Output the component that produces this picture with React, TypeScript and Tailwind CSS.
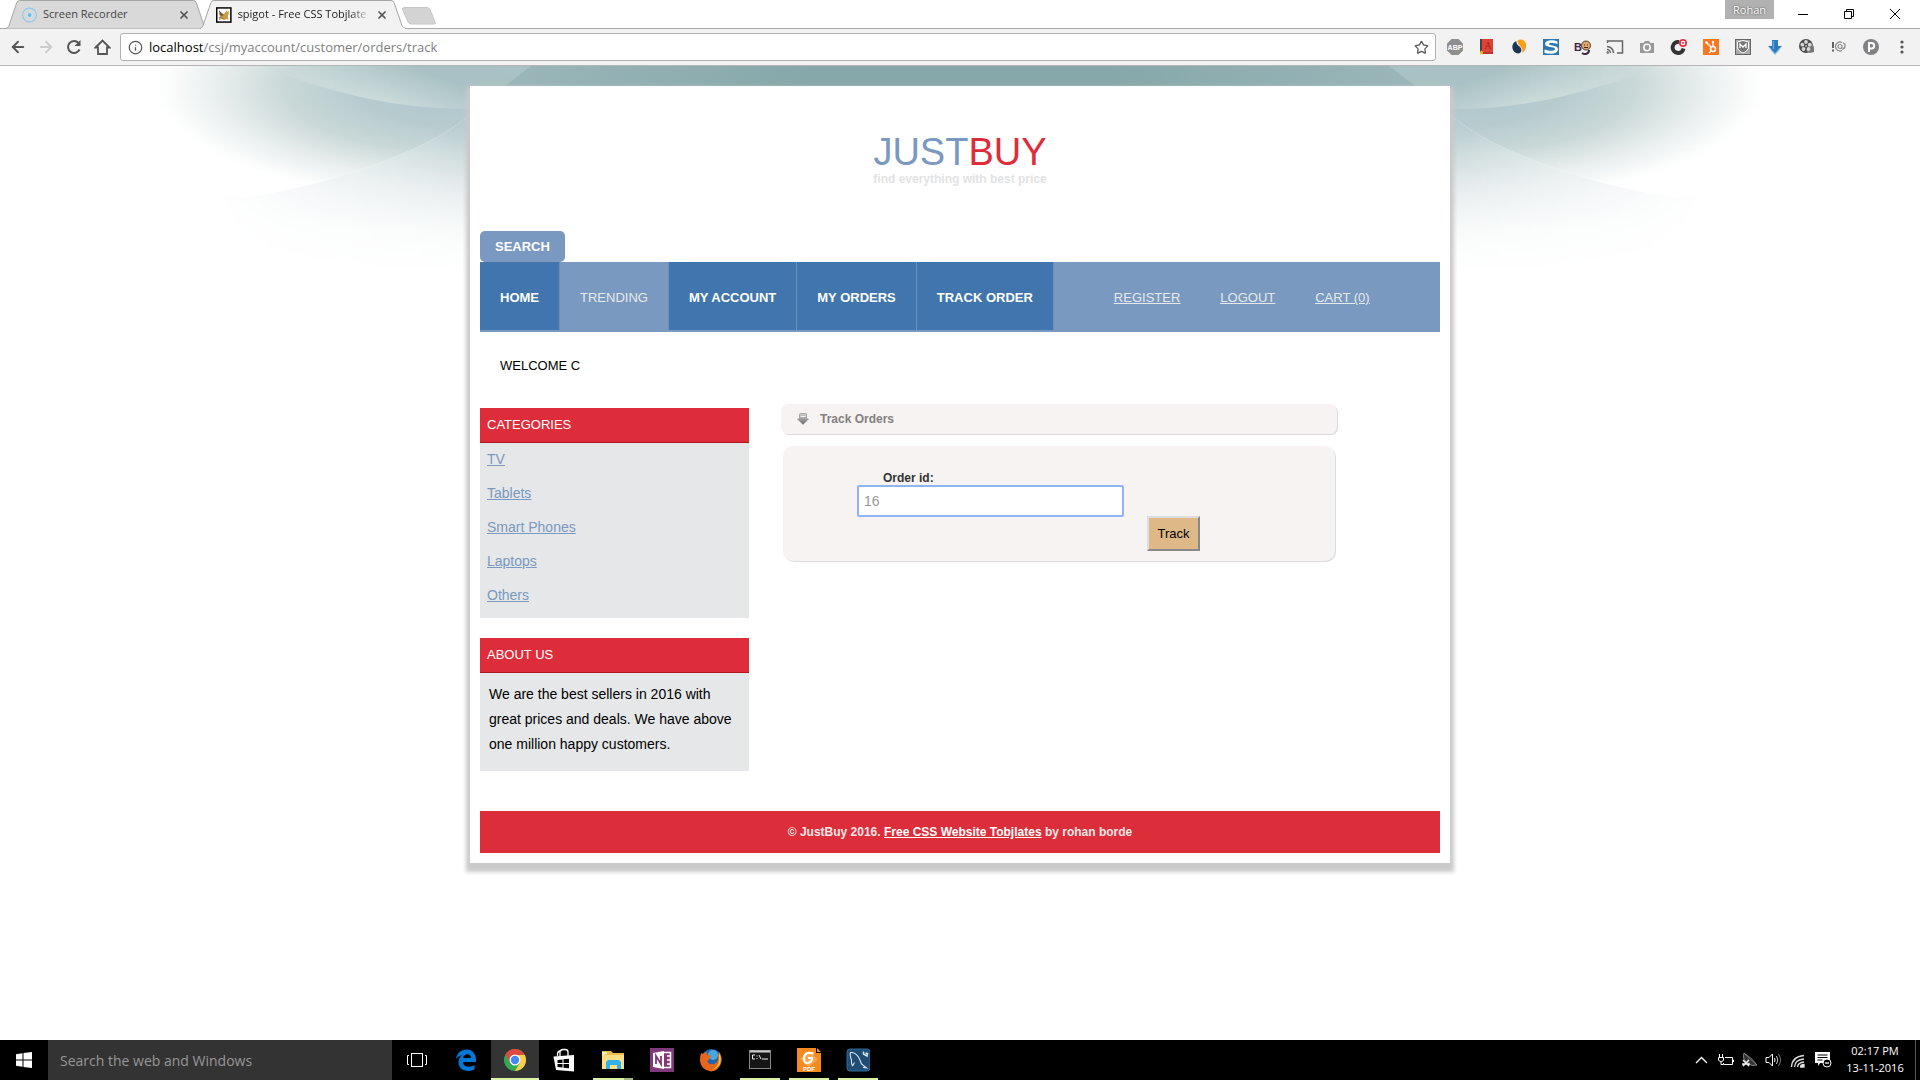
import React from "react";
import { ArrowLeft, ArrowRight, Info, Star, X } from "lucide-react";

const categories = ["TV", "Tablets", "Smart Phones", "Laptops", "Others"];

function Tab({ title, active, icon }: { title: string; active?: boolean; icon: React.ReactNode }) {
  return (
    <div className={active ? "relative z-10 -ml-2 h-[29px] w-[206px]" : "relative h-[29px] w-[202px]"}>
      <svg className="absolute inset-0 h-full w-full" viewBox="0 0 206 29" preserveAspectRatio="none" aria-hidden="true">
        <path
          d="M0 28.5C2 28 2.500 27 3 25.500L11 2.500Q12 .5 14 .5H191Q193 .5 194 2.500L202 25.500Q203 28 206 28.500"
          fill={active ? "#f2f2f2" : "#d9d9d9"}
          stroke="#a5a5a5"
        />
        {active && <path d="M1 29H205" stroke="#f2f2f2" strokeWidth="2" />}
      </svg>
      <div className="relative flex h-[29px] items-center pl-4 pr-4">
        {icon}
        <span
          className={
            active
              ? "ml-[6px] w-[136px] whitespace-nowrap text-[11px] text-[#222] [mask-image:linear-gradient(to_right,black_85%,transparent)]"
              : "ml-[6px] w-[138px] whitespace-nowrap text-[11px] text-[#444]"
          }
        >
          {title}
        </span>
        <button aria-label={"Close " + title} className="ml-1 flex h-4 w-4 items-center justify-center text-[#555]">
          <X size={12} strokeWidth={3.5} />
        </button>
      </div>
    </div>
  );
}

function RecorderIcon() {
  return (
    <svg width="16" height="16" viewBox="0 0 16 16" fill="none" aria-hidden="true">
      <circle cx="8" cy="8" r="7.300" stroke="#8ccbea" strokeWidth="1.200" />
      <circle cx="8" cy="8" r="3.500" fill="#c9e0ea" />
      <circle cx="8" cy="8" r="2" fill="#6abdeb" />
    </svg>
  );
}

function SpigotIcon() {
  return (
    <svg width="16" height="16" viewBox="0 0 16 16" aria-hidden="true">
      <rect x=".75" y=".75" width="14.500" height="14.500" fill="#fff" stroke="#000" strokeWidth="1.500" />
      <path d="M3 4l3 2 2 1 2-2 1-2 .5 2 1.500-1.500L13 7l-1 2 1 4-2-1-3 1-2-1-3 1 1-3z" fill="#cf9a45" />
      <path d="M3 3l3 3.500L8 8l-2 1-2-1zM10 10l1.500 2" fill="#6b5638" />
      <path d="M3 11l3-1 1.500 2" stroke="#777" fill="none" />
    </svg>
  );
}

const ext: { name: string; art: React.ReactNode }[] = [
  {
    name: "Adblock",
    art: (
      <>
        <path d="M5.500 1h7L17 5.500v7L12.500 17h-7L1 12.500v-7z" fill="#8e8e8e" />
        <text x="9" y="12" fontSize="7" fontWeight="700" fill="#fff" textAnchor="middle" fontFamily="Liberation Sans">ABP</text>
      </>
    ),
  },
  {
    name: "Dictionary",
    art: (
      <>
        <path d="M2 1h3v13H2z" fill="#444" />
        <path d="M4 1h11v13H4z" fill="#dd4437" />
        <text x="10" y="11" fontSize="10" fill="#a82019" textAnchor="middle" fontFamily="Liberation Serif">A</text>
        <path d="M3 14h12v2H4z" fill="#b5362c" />
        <path d="M2 14l1.500-1.500L5 14l-.5 2.500-1-.8-1.500.8z" fill="#f4bd12" />
      </>
    ),
  },
  {
    name: "SimilarWeb",
    art: (
      <>
        <path d="M6.500 3C1 5 1 12 6 15c5 2 7-3 4-6C8 7 6 6 6.500 3z" fill="#1d3553" />
        <path d="M8 2c5-2 9 2 8 7-.5 3-2 5-4 6 1-3 0-5-2-7C8 6 7 4 8 2z" fill="#f9a01b" />
      </>
    ),
  },
  {
    name: "Stylish",
    art: (
      <>
        <rect x="1" y="1" width="16" height="16" fill="#2f77b0" />
        <path d="M15.500 3.500C11 1.500 3 2 3 6c0 4 10 2 10 5 0 2.500-6 2-10.500.5V15c5 1.500 13.500 1.500 13.500-4 0-4-9-3-9-5 0-1.500 5-1 8.500 0z" fill="#fff" />
      </>
    ),
  },
  {
    name: "Bug",
    art: (
      <>
        <text x="0" y="13" fontSize="11" fontWeight="700" fill="#3d2445" fontFamily="Liberation Sans">B</text>
        <circle cx="12" cy="7.500" r="4.500" fill="#e0a66b" stroke="#583b30" />
        <path d="M10 7h1M13 7h1M10 9.500h4" stroke="#4a2b22" />
        <path d="M8 15c3 2 7 1 7-3" stroke="#3d2445" strokeWidth="2" fill="none" />
      </>
    ),
  },
  {
    name: "Cast",
    art: (
      <g fill="none" stroke="#666" strokeWidth="1.500">
        <path d="M1.500 5V3h15v12H11" />
        <path d="M1 8.500A6.500 6.500 0 0 1 7.500 15M1 11.500A3.500 3.500 0 0 1 4.500 15" />
        <circle cx="1.700" cy="14.500" r=".5" fill="#666" />
      </g>
    ),
  },
  {
    name: "Camera",
    art: (
      <>
        <path d="M2 5h3.500L7 3h4l1.500 2H16v10H2z" fill="#999" />
        <circle cx="9" cy="9.500" r="3.200" fill="none" stroke="#fff" strokeWidth="1.600" />
      </>
    ),
  },
  {
    name: "Opera",
    art: (
      <>
        <path d="M13.500 10.500a5.500 5.500 0 1 1-4.500-6.500" fill="none" stroke="#333" strokeWidth="4" />
        <circle cx="13" cy="5" r="4" fill="#ea3344" />
        <circle cx="13" cy="5" r="1.600" fill="none" stroke="#fff" strokeWidth="1.200" />
      </>
    ),
  },
  {
    name: "HubSpot",
    art: (
      <>
        <rect x="1" y="1" width="16" height="16" fill="#f8761f" />
        <circle cx="11" cy="11" r="2.500" fill="none" stroke="#fff" strokeWidth="1.500" />
        <path d="M4 4l5 5M11 8.500V4M9 13l-2 2" stroke="#fff" strokeWidth="1.300" />
        <circle cx="4.500" cy="4.500" r="1.300" fill="#fff" />
        <circle cx="11" cy="4" r="1.200" fill="#fff" />
      </>
    ),
  },
  {
    name: "Mail shield",
    art: (
      <>
        <rect x="1.500" y="1.500" width="15" height="15" fill="#aaa" stroke="#666" />
        <path d="M3.500 4L9 2.500 14.500 4v5c0 3-3 5-5.500 6-2.500-1-5.500-3-5.500-6z" fill="#777" stroke="#fff" />
        <path d="M6 10V6l3 3 3-3v4" fill="none" stroke="#fff" strokeWidth="1.300" />
      </>
    ),
  },
  {
    name: "Downloader",
    art: (
      <>
        <path d="M3 10l6 7 6-7-6 4z" fill="#7db9ea" />
        <path d="M6 2h6v6h4l-7 7-7-7h4z" fill="#2e78bd" />
        <path d="M7.500 3v8" stroke="#5fa8e6" strokeWidth="1.500" />
      </>
    ),
  },
  {
    name: "Film reel",
    art: (
      <>
        <circle cx="8" cy="8" r="7" fill="#4a4a4a" />
        <path d="M12 4l4 5v5l-4 1-4-2z" fill="#777" />
        <g fill="#d5d5d5">
          <circle cx="8" cy="4" r="1.900" />
          <circle cx="4.300" cy="6.700" r="1.900" />
          <circle cx="5.500" cy="11" r="1.900" />
          <circle cx="10.500" cy="11" r="1.900" />
          <circle cx="11.700" cy="6.700" r="1.900" />
        </g>
        <circle cx="8" cy="8" r="1" fill="#bbb" />
      </>
    ),
  },
  {
    name: "Page alert",
    art: (
      <g fill="none" stroke="#888" strokeWidth="1.200">
        <path d="M3 4v6M3 11.500v2" strokeWidth="1.800" stroke="#555" />
        <path d="M12 4.500a4.500 4.500 0 1 0 0 8" />
        <circle cx="10" cy="8.500" r="2" />
        <path d="M13 5l2 1v3l-2 2M12 11l3-1" />
      </g>
    ),
  },
  {
    name: "Pocket",
    art: (
      <>
        <circle cx="9" cy="9" r="8" fill="#848084" />
        <path d="M7 14V5h2.500a2.700 2.700 0 0 1 0 5.400H7" fill="none" stroke="#fff" strokeWidth="2" />
      </>
    ),
  },
];

function BrowserChrome() {
  return (
    <header className="bg-[#f2f2f2] font-['Open_Sans',sans-serif]">
      <div className="flex h-[29px] items-start border-b border-[#a9a9a9] bg-white pl-[6px]">
        <Tab title="Screen Recorder" icon={<RecorderIcon />} />
        <Tab title="spigot - Free CSS Tobjlate" active icon={<SpigotIcon />} />
        <button aria-label="New tab" className="-ml-1 mt-[7px]">
          <svg width="36" height="18" viewBox="0 0 36 18" aria-hidden="true">
            <path d="M2 .5H25Q27 .5 28 2.500L33 15Q34 17 32 17H9Q7 17 6 15L.5 2.500Q0 .5 2 .5z" fill="#d3d3d3" stroke="#c6c6c6" />
          </svg>
        </button>
        <div className="flex-1" />
        <button className="h-[19px] w-[49px] bg-[#b1b1b1] text-[11px] leading-[18px] text-white [text-shadow:0_0_2px_#333]">Rohan</button>
        <div className="flex h-7 items-center pl-[6px] pr-[2px] text-black">
          <button aria-label="Minimize" className="flex w-[46px] justify-center">
            <svg width="10" height="10" viewBox="0 0 10 10"><path d="M0 5.500h10" stroke="#000" /></svg>
          </button>
          <button aria-label="Restore" className="flex w-[46px] justify-center">
            <svg width="10" height="10" viewBox="0 0 10 10" fill="none" stroke="#000"><path d="M.5 2.500h7v7h-7zM2.500 2.500v-2h7v7h-2" /></svg>
          </button>
          <button aria-label="Close" className="flex w-[46px] justify-center">
            <svg width="10" height="10" viewBox="0 0 10 10" stroke="#000"><path d="M0 0l10 10M10 0L0 10" /></svg>
          </button>
        </div>
      </div>
      <div className="flex h-[37px] items-center border-b border-[#b6b4b6] pl-1 pr-[10px] text-[#555]">
        <button aria-label="Back" className="flex w-7 justify-center"><ArrowLeft size={18} strokeWidth={2.5} /></button>
        <button aria-label="Forward" className="flex w-7 justify-center text-[#ccc]"><ArrowRight size={18} strokeWidth={2.5} /></button>
        <button aria-label="Reload" className="flex w-7 justify-center">
          <svg width="16" height="16" viewBox="0 0 16 16" fill="none" stroke="#555" strokeWidth="2">
            <path d="M13.500 10.500A6 6 0 1 1 12.500 4" />
            <path d="M14.500 1v6h-6z" fill="#555" stroke="none" />
          </svg>
        </button>
        <button aria-label="Home" className="flex w-7 justify-center">
          <svg width="17" height="16" viewBox="0 0 17 16" fill="none" stroke="#555" strokeWidth="1.800">
            <path d="M1.500 8.500l7-7 7 7H13V15H4V8.500z" />
          </svg>
        </button>
        <div className="ml-1 flex h-7 flex-1 items-center rounded-[3px] border border-[#b0b0b0] bg-white pl-[7px] pr-[6px]">
          <Info size={15} strokeWidth={2} />
          <a href="#track" className="ml-[6px] flex-1 text-[13px] leading-5 text-[#808080]">
            <span className="text-black">localhost</span>/csj/myaccount/customer/orders/track
          </a>
          <button aria-label="Bookmark this page"><Star size={15} strokeWidth={2} /></button>
        </div>
        <div className="flex items-center gap-[14px] pl-[10px]">
          {ext.map((e) => (
            <button key={e.name} aria-label={e.name}>
              <svg width="18" height="18" viewBox="0 0 18 18">{e.art}</svg>
            </button>
          ))}
          <button aria-label="Menu" className="flex w-4 justify-center">
            <svg width="4" height="16" viewBox="0 0 4 16" fill="#555"><circle cx="2" cy="3" r="1.600" /><circle cx="2" cy="8" r="1.600" /><circle cx="2" cy="13" r="1.600" /></svg>
          </button>
        </div>
      </div>
    </header>
  );
}

function WaveHalf() {
  return (
    <>
      <path d="M0 0H800V205H300Q100 205 0 125z" fill="url(#lower)" mask="url(#edge)" />
      <path d="M0 0H385L345 20Q300 60 270 75Q190 115 88 131L0 125z" fill="#fff" />
      <path d="M0 0H385L345 20Q300 60 270 75Q190 115 88 131L0 125z" fill="url(#middle)" />
      <path d="M102 0Q210 44 310 43L350 20L372 0z" fill="url(#upper)" mask="url(#upperEdge)" />
      <path d="M345 20L371 0H800V20z" fill="url(#strip)" />
      <path d="M329 0H371L355 11z" fill="#a9c2c5" />
    </>
  );
}

function Backdrop() {
  return (
    <svg className="absolute left-1/2 top-0 -translate-x-1/2" width="1600" height="210" viewBox="0 0 1600 210" aria-hidden="true">
      <defs>
        <linearGradient id="lower" x1="0" y1="0" x2="0" y2="205" gradientUnits="userSpaceOnUse">
          <stop offset="0.200" stopColor="#b0c7cc" />
          <stop offset="0.320" stopColor="#bccfd3" />
          <stop offset="0.420" stopColor="#cddbdb" />
          <stop offset="0.600" stopColor="#e6ecee" />
          <stop offset="0.800" stopColor="#f8fafa" />
          <stop offset="1" stopColor="#fff" />
        </linearGradient>
        <linearGradient id="fade" x1="60" x2="300" y1="150" y2="90" gradientUnits="userSpaceOnUse">
          <stop offset="0" stopColor="#000" />
          <stop offset="1" stopColor="#fff" />
        </linearGradient>
        <mask id="edge"><rect width="800" height="210" fill="url(#fade)" /></mask>
        <radialGradient id="middle" gradientUnits="userSpaceOnUse" cx="0" cy="0" r="1" gradientTransform="translate(305 20) scale(310 115)">
          <stop offset="0" stopColor="#adc5cb" />
          <stop offset="0.350" stopColor="#b7cbcf" />
          <stop offset="0.580" stopColor="#c9d8d7" />
          <stop offset="0.780" stopColor="#e6ecec" />
          <stop offset="0.920" stopColor="#f7f9f9" />
          <stop offset="1" stopColor="#fff" />
        </radialGradient>
        <linearGradient id="upper" x1="250" x2="235" y1="0" y2="42" gradientUnits="userSpaceOnUse">
          <stop offset="0" stopColor="#a9c1c4" />
          <stop offset="1" stopColor="#cddcdb" />
        </linearGradient>
        <linearGradient id="upperFade" x1="100" x2="230" y1="0" y2="0" gradientUnits="userSpaceOnUse">
          <stop offset="0" stopColor="#777" />
          <stop offset="1" stopColor="#fff" />
        </linearGradient>
        <mask id="upperEdge"><rect width="800" height="210" fill="url(#upperFade)" /></mask>
        <linearGradient id="strip" x1="350" x2="650" y1="0" y2="0" gradientUnits="userSpaceOnUse">
          <stop offset="0" stopColor="#9ab6b9" />
          <stop offset="1" stopColor="#86a8aa" />
        </linearGradient>
      </defs>
      <WaveHalf />
      <g transform="translate(1600 0) scale(-1 1)"><WaveHalf /></g>
    </svg>
  );
}

function Nav() {
  const item = "border-r border-[#6a90bf] bg-[#4076ad] px-5 pt-1 font-bold text-white leading-[64px]";
  return (
    <nav className="flex h-[70px] items-start bg-[#7999c0] text-[13px] text-[#e6eaea]">
      <a href="#home" className={item}>HOME</a>
      <a href="#trending" className="border-r border-[#6a90bf] px-5 pt-1 leading-[64px]">TRENDING</a>
      <a href="#account" className={item}>MY ACCOUNT</a>
      <a href="#orders" className={item}>MY ORDERS</a>
      <a href="#track" className={item}>TRACK ORDER</a>
      <div className="flex gap-10 pl-[60px] pt-1 leading-[64px] underline">
        <a href="#register">REGISTER</a>
        <a href="#logout">LOGOUT</a>
        <a href="#cart">CART (0)</a>
      </div>
    </nav>
  );
}

function Shop() {
  return (
    <main className="relative flex-1 overflow-hidden bg-white pb-16 pt-5 font-['Liberation_Sans',Arial,sans-serif]">
      <Backdrop />
      <div className="relative mx-auto max-w-[980px] bg-white p-[10px] shadow-[0_5px_4px_4px_#cacaca]">
        <div className="flex h-[135px] flex-col items-center pt-[37px]">
          <h1 className="text-[38px] leading-[38px] text-[#7999c0]">JUST<span className="text-[#dd2d3a]">BUY</span></h1>
          <p className="text-[12px] font-bold leading-4 text-[#e2e3e4]">find everything with best price</p>
        </div>
        <button className="block h-[31px] rounded-[5px] bg-[#7999c0] px-[15px] text-[13px] font-bold text-white">SEARCH</button>
        <Nav />
        <p className="px-5 pt-6 text-[13px] leading-5 text-black">WELCOME C</p>
        <div className="flex items-start pb-10 pt-7">
          <aside className="w-[269px] shrink-0 pt-1">
            <section className="bg-[#e5e7e9]">
              <h2 className="border-b border-[#ac1521] bg-[#dd2d3a] px-[7px] pb-[1px] text-[13px] leading-[33px] text-white">CATEGORIES</h2>
              <ul className="px-[7px] pb-[5px] text-[14px] text-[#7999c0]">
                {categories.map((c) => (
                  <li key={c} className="pb-[2px] leading-8"><a href="#category" className="underline">{c}</a></li>
                ))}
              </ul>
            </section>
            <section className="mt-5 bg-[#e5e7e9]">
              <h2 className="border-b border-[#ac1521] bg-[#dd2d3a] px-[7px] pb-[1px] text-[13px] leading-[33px] text-white">ABOUT US</h2>
              <p className="px-[9px] pb-[14px] pt-[9px] text-[14px] leading-[25px] text-black">
                We are the best sellers in 2016 with great prices and deals. We have above one million happy customers.
              </p>
            </section>
          </aside>
          <section className="ml-8 w-[556px]">
            <h2 className="flex h-[30px] items-center rounded-[7px] bg-[#f6f3f2] pl-4 text-[12px] font-bold text-[#857f7f] shadow-[1px_1px_0_#dcdcdc]">
              <svg className="mr-[11px] shrink-0" width="12" height="12" viewBox="0 0 12 12" aria-hidden="true">
                <defs>
                  <linearGradient id="arrow" x1="0" y1="0" x2="0" y2="1"><stop offset="0" stopColor="#d4d4d4" /><stop offset="1" stopColor="#666" /></linearGradient>
                </defs>
                <path d="M2.500 1.500Q2.500 .5 3.500 .5h5q1 0 1 1V6H11.500L6 11.500.5 6h2z" fill="url(#arrow)" stroke="#909090" strokeWidth=".7" />
                <path d="M3.500 3.500h5" stroke="#f4f4f4" />
              </svg>
              Track Orders
            </h2>
            <form className="mx-[2px] mt-3 h-[115px] rounded-[10px] bg-[#f6f3f2] pl-[74px] pt-[26px] shadow-[1px_1px_0_#dcdcdc]" onSubmit={(e) => e.preventDefault()}>
              <label htmlFor="order-id" className="block pl-[26px] text-[12px] font-bold leading-[13px] text-[#333]">Order id:</label>
              <input id="order-id" type="text" defaultValue="16" className="block h-8 w-[267px] rounded-[2px] border-2 border-[#8fb4f2] bg-white px-[5px] text-[14px] text-[#999] outline-none" />
              <button type="submit" className="-mt-px ml-[290px] block h-[35px] w-[53px] border-2 border-b-[#888] border-l-[#ddd] border-r-[#888] border-t-[#ddd] bg-[#deb887] text-[13px] text-black">Track</button>
            </form>
          </section>
        </div>
        <footer className="bg-[#dc2d3a] text-center text-[12px] font-bold leading-[42px] text-[#f3e6e6]">
          © JustBuy 2016. <a href="#site" className="text-white underline">Free CSS Website Tobjlates</a> by rohan borde
        </footer>
      </div>
    </main>
  );
}

const apps: { name: string; box: string; bar: string; art: React.ReactNode }[] = [
  {
    name: "Task View",
    box: "bg-black",
    bar: "",
    art: (
      <g fill="none" stroke="#fff"><rect x="6.500" y="5.500" width="11" height="13" /><path d="M4 7.500H2.500v9H4M20 7.500h1.500v9H20" /></g>
    ),
  },
  {
    name: "Edge",
    box: "bg-black",
    bar: "",
    art: <path d="M2 11C3 5 7 1.500 12.500 1.500c6 0 9.500 4.500 9.500 10.500v2H9c0 5 7 6 11.500 3v4.500C13 25 4.500 22 4.500 14c0-3 1.500-5.500 4-7C6 7.500 3.500 9 2 11zm7-1h8c0-5-7-5-8 0z" fill="#0078d7" />,
  },
  {
    name: "Chrome",
    box: "bg-[#343434]",
    bar: "w-full bg-[#d9f2a5]",
    art: (
      <>
        <circle cx="12" cy="12" r="11" fill="#35a853" />
        <path d="M2.500 6.500A11 11 0 0 1 21.500 6.500L12 12z" fill="#dd4b3e" />
        <path d="M2.500 6.500L7.500 15 12 7H21.500A11 11 0 0 0 2.500 6.500z" fill="#dd4b3e" />
        <path d="M12 7h9.800A11 11 0 0 1 12 23l5-8.500z" fill="#fccd46" />
        <circle cx="12" cy="12" r="5.500" fill="#fff" />
        <circle cx="12" cy="12" r="4.200" fill="#4587f3" />
      </>
    ),
  },
  {
    name: "Store",
    box: "bg-black",
    bar: "",
    art: (
      <>
        <path d="M1.500 8.500L22 7v16.500L4 22z" fill="#fff" />
        <path d="M8 8V4q0-2.500 3-2.500h2q3 0 3 2.500v4M5.500 8V6q0-3 4-3.500" stroke="#fff" fill="none" strokeWidth="1.300" />
        <path d="M5.500 12l5-.5v3.500h-5zM11.500 11.300l5.500-.6V15h-5.500zM5.500 16h5v3.500l-5-.5zM11.500 16H17v4.300l-5.500-.6z" fill="#000" />
      </>
    ),
  },
  {
    name: "File Explorer",
    box: "bg-black",
    bar: "w-10 bg-[linear-gradient(to_right,#d9f2a5_78%,#a4b780_78%)]",
    art: (
      <>
        <path d="M1 3h9l2 2h11v16H1z" fill="#e8bd4e" />
        <path d="M1 7h22v14H1z" fill="#fbdf86" />
        <path d="M1 7V4h5v2z" fill="#fff2b8" />
        <path d="M5 21v-7l2-2h11l2 2v7h-4v-4H9v4z" fill="#2fb2e8" />
      </>
    ),
  },
  {
    name: "OneNote",
    box: "bg-black",
    bar: "",
    art: (
      <>
        <rect width="24" height="24" fill="#80397b" />
        <path d="M13 4.500h7.500v15H13z" fill="none" stroke="#fff" strokeWidth="1.500" />
        <path d="M17 8h4M17 12h4M17 16h4" stroke="#fff" strokeWidth="1.500" />
        <path d="M3 5l11-2v18L3 19z" fill="#fff" />
        <path d="M6 16V8l5 8V8" stroke="#80397b" strokeWidth="1.800" fill="none" />
      </>
    ),
  },
  {
    name: "Firefox",
    box: "bg-black",
    bar: "",
    art: (
      <>
        <circle cx="12.500" cy="11.500" r="10.500" fill="#1f66ad" />
        <circle cx="14" cy="7" r="5" fill="#4ba6dd" />
        <path d="M2 5l2 1q2-2 4-2-1 2 1 3l3 1-2 3q0 2-2 2 2 4 7 3 5-2 4-8l1-4q3 4 2 10-2 9-10 9.500Q2 22 1 13q0-5 1-8z" fill="#e8661b" />
        <path d="M20 5q3 5 1 11-3 5-8 6 7-4 7-10z" fill="#f9c32f" />
      </>
    ),
  },
  {
    name: "Command Prompt",
    box: "bg-black",
    bar: "w-10 bg-[#d9f2a5]",
    art: (
      <>
        <rect x="1.500" y="2.500" width="21" height="18" fill="#151515" stroke="#888" />
        <path d="M2 3.500h20" stroke="#ccc" strokeWidth="2" />
        <path d="M7 7H4.500v4H7M9 7.500v1M9 10v1M11 7l2 4M14 11h6" stroke="#eee" fill="none" />
      </>
    ),
  },
  {
    name: "Foxit PDF",
    box: "bg-black",
    bar: "w-10 bg-[#d9f2a5]",
    art: (
      <>
        <path d="M0 0h19v5h5v19H0z" fill="#f58a1f" />
        <path d="M20 0l4 4h-4z" fill="#f58a1f" />
        <path d="M12 3L21 11 12 19 3 11z" fill="#f9a54f" />
        <path d="M16.500 5.500Q8 3 7 9.500q-.5 6 4 5.500 4-1 4-5h-4" fill="none" stroke="#fff" strokeWidth="2.200" />
        <text x="12" y="22.500" fontSize="6" fontWeight="700" fill="#fff" textAnchor="middle" fontFamily="Liberation Sans">PDF</text>
      </>
    ),
  },
  {
    name: "MySQL Workbench",
    box: "bg-black",
    bar: "w-10 bg-[#d9f2a5]",
    art: (
      <>
        <rect x="1" y="1" width="23" height="22" rx="3" fill="#1f4d74" stroke="#2f6c9d" />
        <path d="M6.500 18Q5 15 5.500 12 3.500 7 4.500 4.500 9 4 12.500 9q2 4 3 7l5 4-3.500-.5M6.500 18l2-3.500" fill="none" stroke="#d7e5f0" strokeWidth="1.100" />
        <path d="M17.500 3.500v2.500l3.500 2 .5-2.500-2-.5" fill="none" stroke="#d7e5f0" strokeWidth="1.500" />
      </>
    ),
  },
];

function Taskbar() {
  return (
    <footer className="flex h-10 items-stretch bg-black font-['Open_Sans',sans-serif] text-white">
      <button aria-label="Start" className="flex w-12 items-center justify-center">
        <svg width="16" height="16" viewBox="0 0 16 16" fill="#fff"><path d="M0 2.200l6.500-1V7.500H0zM7.500 1L16 0v7.500H7.500zM0 8.500h6.500v6.300L0 13.800zM7.500 8.500H16V16l-8.500-1z" /></svg>
      </button>
      <input aria-label="Search the web and Windows" placeholder="Search the web and Windows" className="w-[344px] bg-[#333] px-3 text-[14px] text-white outline-none placeholder:text-[#979797]" />
      <div className="flex gap-px pl-px">
        {apps.map((a) => (
          <button key={a.name} aria-label={a.name} className={"relative flex w-12 items-center justify-center " + a.box}>
            <svg width="24" height="24" viewBox="0 0 24 24">{a.art}</svg>
            {a.bar && <span className={"absolute bottom-0 h-[2px] " + a.bar} />}
          </button>
        ))}
      </div>
      <div className="flex-1" />
      <div className="flex items-center gap-1">
        <button aria-label="Show hidden icons" className="flex w-5 justify-center">
          <svg width="13" height="8" viewBox="0 0 13 8" fill="none" stroke="#fff" strokeWidth="1.300"><path d="M1 7l5.500-5.500L12 7" /></svg>
        </button>
        <button aria-label="Battery" className="flex w-5 justify-center">
          <svg width="17" height="14" viewBox="0 0 17 14" fill="none" stroke="#fff"><path d="M8 4.500h7.500v7h-9V10M15.500 7h1v2M1.500 4.500h5V7Q6 8.500 4 8.500T1.500 7zM2.500 4V1M5.500 4V1M4 9v2.500h2" /></svg>
        </button>
        <button aria-label="Connection" className="flex w-5 justify-center">
          <svg width="17" height="16" viewBox="0 0 17 16"><path d="M3 1Q1 7 6 11q5 4 10 2z" fill="#333" stroke="#999" strokeWidth=".8" /><path d="M3 1l8 6 5 6" stroke="#888" fill="none" strokeWidth=".8" /><path d="M2 8l6 6M8 8l-6 6M1 12h8" stroke="#eee" strokeWidth="1.600" /></svg>
        </button>
        <button aria-label="Volume" className="flex w-5 justify-center">
          <svg width="17" height="16" viewBox="0 0 17 16" fill="none" stroke="#fff"><path d="M1 5.500h3L7.500 2v12L4 10.500H1zM9.500 6q1 2 0 4" /><path d="M11.500 4q2.500 4 0 8" stroke="#ccc" /><path d="M13.500 2q4 6 0 12" stroke="#777" /></svg>
        </button>
        <button aria-label="Wi-Fi" className="flex w-5 justify-center">
          <svg width="15" height="16" viewBox="0 0 15 16" fill="none" stroke="#ddd" strokeWidth="1.300"><path d="M1.500 15Q2 4.500 14 3.500M4.500 15q.5-7.500 9.500-8M7.500 15q.5-4.500 6.500-5" /><path d="M10.500 15q0-2.500 3.500-2.500V15z" fill="#fff" /></svg>
        </button>
        <button aria-label="Notifications" className="flex w-6 justify-center">
          <svg width="17" height="16" viewBox="0 0 17 16"><path d="M0 0h15v11H5l-2 3v-3H0z" fill="#fff" /><path d="M2.500 3h10M2.500 5.500h10M2.500 8h5" stroke="#000" /><circle cx="12" cy="11" r="4" fill="#000" stroke="#fff" /><path d="M10 11h4" stroke="#fff" strokeWidth="1.300" /></svg>
        </button>
      </div>
      <div className="ml-2 flex w-16 flex-col justify-center whitespace-nowrap pb-[2px] text-center text-[11px] leading-[17px]">
        <span>02:17 PM</span>
        <span>13-11-2016</span>
      </div>
      <div className="ml-2 w-[5px] border-l border-[#555]" />
    </footer>
  );
}

export default function App() {
  return (
    <div className="flex min-h-screen flex-col bg-white">
      <BrowserChrome />
      <Shop />
      <Taskbar />
    </div>
  );
}
